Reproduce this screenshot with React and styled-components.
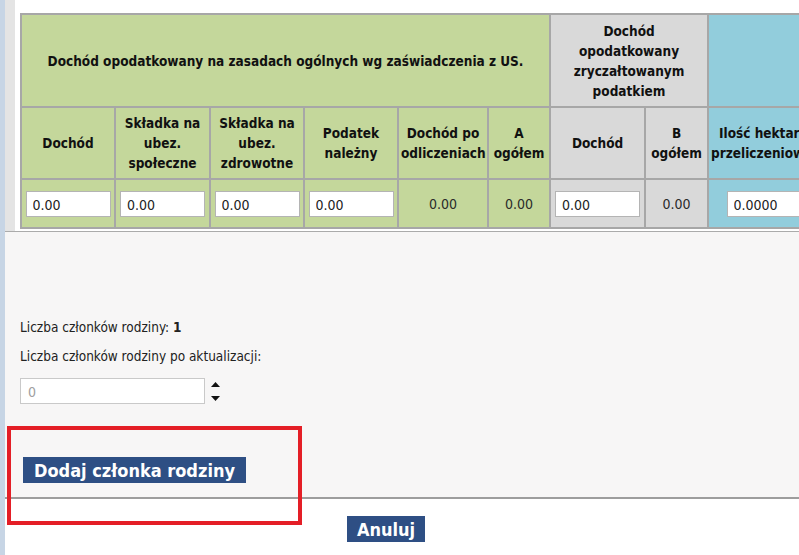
import React from "react";
import styled, { createGlobalStyle } from "styled-components";

const GlobalStyle = createGlobalStyle`
  html, body {
    margin: 0;
    padding: 0;
    background: #ffffff;
  }
  body {
    font-family: "DejaVu Sans Condensed", "DejaVu Sans", "Liberation Sans", sans-serif;
    color: #1a1a1a;
  }
`;

const Page = styled.div`
  position: relative;
  display: flex;
  width: 799px;
  height: 555px;
  overflow: hidden;
`;

const SideStrip = styled.div`
  flex: 0 0 5px;
  background: #c7d5e5;
`;

const Main = styled.div`
  flex: 1;
  display: flex;
  flex-direction: column;
  min-width: 0;
`;

const TopArea = styled.div`
  height: 231px;
  box-sizing: border-box;
  border-left: 10px solid #e4e4e4;
  padding: 13px 0 0 5px;
  background: #ffffff;
  overflow: hidden;
`;

const Table = styled.table`
  border-collapse: collapse;
  table-layout: fixed;
  width: 1029px;
`;

const cellColors = {
  green: "#c4d79b",
  gray: "#d9d9d9",
  blue: "#92cddc",
};

const Th = styled.th`
  background: ${(p) => cellColors[p.$tone]};
  border: 2px solid #a7a7a7;
  padding: 0 2px;
  font-size: 13.5px;
  font-weight: bold;
  line-height: 20px;
  color: #111;
  text-align: center;
  vertical-align: middle;
  white-space: nowrap;
`;

const Td = styled.td`
  background: ${(p) => cellColors[p.$tone]};
  border: 2px solid #a7a7a7;
  padding: 0;
  font-size: 14px;
  color: #2a2a2a;
  text-align: center;
  vertical-align: middle;
`;

const HeadRowTop = styled.tr`
  height: 93px;
`;

const HeadRowSub = styled.tr`
  height: 72px;
`;

const ValueRow = styled.tr`
  height: 49px;
`;

const CellInput = styled.input`
  display: block;
  margin: 0 auto;
  width: 85px;
  height: 26px;
  box-sizing: border-box;
  border: 1px solid #b4b4b4;
  background: #fff;
  padding: 3px 0 0 6px;
  font-family: inherit;
  font-size: 14px;
  color: #222;
  outline: none;
`;

const Panel = styled.div`
  height: 268px;
  box-sizing: border-box;
  border-top: 1px solid #ababab;
  border-bottom: 2px solid #9d9d9d;
  background: #f7f6f6;
  padding: 86px 0 0 15px;
  display: flex;
  flex-direction: column;
  align-items: flex-start;
`;

const InfoLine = styled.div`
  font-size: 13.5px;
  line-height: 18px;
  color: #222;
  margin-bottom: ${(p) => p.$gap || 0}px;

  b {
    font-weight: bold;
  }
`;

const SpinRow = styled.div`
  display: flex;
  align-items: center;
  gap: 6px;
`;

const NumberBox = styled.input`
  width: 185px;
  height: 26px;
  box-sizing: border-box;
  border: 1px solid #c9c9c9;
  background: #fff;
  padding: 2px 0 0 7px;
  font-family: inherit;
  font-size: 14px;
  color: #999;
  outline: none;

  &::placeholder {
    color: #a0a0a0;
  }
`;

const Spinner = styled.div`
  display: flex;
  flex-direction: column;
  gap: 9px;
`;

const ActionButton = styled.button`
  height: 26px;
  box-sizing: border-box;
  border: none;
  background: #2e4f84;
  color: #fff;
  font-family: inherit;
  font-size: 18px;
  font-weight: bold;
  padding: 0 8px;
  cursor: pointer;
  white-space: nowrap;
`;

const AddButton = styled(ActionButton)`
  margin: 53px 0 0 3px;
  width: 223px;
`;

const Footer = styled.div`
  flex: 1;
  background: #fff;
  padding: 17px 0 0 342px;
`;

const CancelButton = styled(ActionButton)`
  width: 78px;
`;

const Highlight = styled.div`
  position: absolute;
  left: 7px;
  top: 426px;
  width: 295px;
  height: 99px;
  box-sizing: border-box;
  border: 4px solid #e41e26;
  pointer-events: none;
`;

const colWidths = [94, 95, 94, 94, 90, 62, 95, 63, 122, 110, 110];

const Arrow = ({ up }) => (
  <svg width="9" height="5" viewBox="0 0 9 5">
    <polygon points={up ? "4.5,0 9,5 0,5" : "0,0 9,0 4.5,5"} fill="#111" />
  </svg>
);

export default function App() {
  return (
    <>
      <GlobalStyle />
      <Page>
        <SideStrip />
        <Main>
          <TopArea>
            <Table>
              <colgroup>
                {colWidths.map((w, i) => (
                  <col key={i} style={{ width: w }} />
                ))}
              </colgroup>
              <thead>
                <HeadRowTop>
                  <Th $tone="green" colSpan={6}>
                    Dochód opodatkowany na zasadach ogólnych wg zaświadczenia z US.
                  </Th>
                  <Th $tone="gray" colSpan={2}>
                    Dochód
                    <br />
                    opodatkowany
                    <br />
                    zryczałtowanym
                    <br />
                    podatkiem
                  </Th>
                  <Th $tone="blue" colSpan={3}>
                    Gospodarstwo
                  </Th>
                </HeadRowTop>
                <HeadRowSub>
                  <Th $tone="green">Dochód</Th>
                  <Th $tone="green">
                    Składka na
                    <br />
                    ubez.
                    <br />
                    społeczne
                  </Th>
                  <Th $tone="green">
                    Składka na
                    <br />
                    ubez.
                    <br />
                    zdrowotne
                  </Th>
                  <Th $tone="green">
                    Podatek
                    <br />
                    należny
                  </Th>
                  <Th $tone="green">
                    Dochód po
                    <br />
                    odliczeniach
                  </Th>
                  <Th $tone="green">
                    A
                    <br />
                    ogółem
                  </Th>
                  <Th $tone="gray">Dochód</Th>
                  <Th $tone="gray">
                    B
                    <br />
                    ogółem
                  </Th>
                  <Th $tone="blue">
                    Ilość hektarów
                    <br />
                    przeliczeniowych
                  </Th>
                  <Th $tone="blue">Dochód z 1 ha</Th>
                  <Th $tone="blue">C ogółem</Th>
                </HeadRowSub>
              </thead>
              <tbody>
                <ValueRow>
                  <Td $tone="green">
                    <CellInput defaultValue="0.00" />
                  </Td>
                  <Td $tone="green">
                    <CellInput defaultValue="0.00" />
                  </Td>
                  <Td $tone="green">
                    <CellInput defaultValue="0.00" />
                  </Td>
                  <Td $tone="green">
                    <CellInput defaultValue="0.00" />
                  </Td>
                  <Td $tone="green">0.00</Td>
                  <Td $tone="green">0.00</Td>
                  <Td $tone="gray">
                    <CellInput defaultValue="0.00" />
                  </Td>
                  <Td $tone="gray">0.00</Td>
                  <Td $tone="blue">
                    <CellInput defaultValue="0.0000" />
                  </Td>
                  <Td $tone="blue">0.00</Td>
                  <Td $tone="blue">0.00</Td>
                </ValueRow>
              </tbody>
            </Table>
          </TopArea>

          <Panel>
            <InfoLine $gap={11}>
              Liczba członków rodziny: <b>1</b>
            </InfoLine>
            <InfoLine $gap={13}>Liczba członków rodziny po aktualizacji:</InfoLine>
            <SpinRow>
              <NumberBox placeholder="0" />
              <Spinner>
                <Arrow up />
                <Arrow />
              </Spinner>
            </SpinRow>
            <AddButton>Dodaj członka rodziny</AddButton>
          </Panel>

          <Footer>
            <CancelButton>Anuluj</CancelButton>
          </Footer>
        </Main>
        <Highlight />
      </Page>
    </>
  );
}
